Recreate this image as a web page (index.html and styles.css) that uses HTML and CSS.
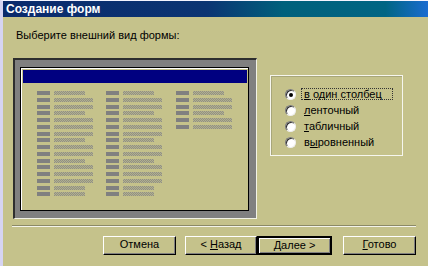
FILE: index.html
```html
<html lang="ru">
<head>
    <meta charset="UTF-8">
    <title>Создание форм</title>
    <link rel="stylesheet" href="styles.css">
</head>
<body>
    <div class="titlebar">Создание форм</div>
    <div class="prompt">Выберите внешний вид формы:</div>

    <div class="content">
        <div class="preview">
            <div class="sample">
                <div class="sample-bar"></div>
                <div class="fields">
                    <div class="col">
                        <div class="row"><span class="lbl"></span><span class="txt short"></span></div>
                        <div class="row"><span class="lbl"></span><span class="txt"></span></div>
                        <div class="row"><span class="lbl"></span><span class="txt"></span></div>
                        <div class="row"><span class="lbl"></span><span class="txt short"></span></div>
                        <div class="row"><span class="lbl"></span><span class="txt"></span></div>
                        <div class="row"><span class="lbl"></span><span class="txt"></span></div>
                        <div class="row"><span class="lbl"></span><span class="txt"></span></div>
                        <div class="row"><span class="lbl"></span><span class="txt short"></span></div>
                        <div class="row"><span class="lbl"></span><span class="txt"></span></div>
                        <div class="row"><span class="lbl"></span><span class="txt"></span></div>
                        <div class="row"><span class="lbl"></span><span class="txt short"></span></div>
                        <div class="row"><span class="lbl"></span><span class="txt"></span></div>
                        <div class="row"><span class="lbl"></span><span class="txt"></span></div>
                        <div class="row"><span class="lbl"></span><span class="txt"></span></div>
                        <div class="row"><span class="lbl"></span><span class="txt short"></span></div>
                        <div class="row"><span class="lbl"></span><span class="txt short"></span></div>
                    </div>
                    <div class="col">
                        <div class="row"><span class="lbl"></span><span class="txt short"></span></div>
                        <div class="row"><span class="lbl"></span><span class="txt"></span></div>
                        <div class="row"><span class="lbl"></span><span class="txt"></span></div>
                        <div class="row"><span class="lbl"></span><span class="txt short"></span></div>
                        <div class="row"><span class="lbl"></span><span class="txt"></span></div>
                        <div class="row"><span class="lbl"></span><span class="txt"></span></div>
                        <div class="row"><span class="lbl"></span><span class="txt"></span></div>
                        <div class="row"><span class="lbl"></span><span class="txt short"></span></div>
                        <div class="row"><span class="lbl"></span><span class="txt"></span></div>
                        <div class="row"><span class="lbl"></span><span class="txt"></span></div>
                        <div class="row"><span class="lbl"></span><span class="txt short"></span></div>
                        <div class="row"><span class="lbl"></span><span class="txt"></span></div>
                        <div class="row"><span class="lbl"></span><span class="txt"></span></div>
                        <div class="row"><span class="lbl"></span><span class="txt"></span></div>
                        <div class="row"><span class="lbl"></span><span class="txt short"></span></div>
                        <div class="row"><span class="lbl"></span><span class="txt short"></span></div>
                    </div>
                    <div class="col">
                        <div class="row"><span class="lbl"></span><span class="txt short"></span></div>
                        <div class="row"><span class="lbl"></span><span class="txt"></span></div>
                        <div class="row"><span class="lbl"></span><span class="txt"></span></div>
                        <div class="row"><span class="lbl"></span><span class="txt short"></span></div>
                        <div class="row"><span class="lbl"></span><span class="txt"></span></div>
                        <div class="row"><span class="lbl"></span><span class="txt"></span></div>
                    </div>
                </div>
            </div>
        </div>

        <div class="options">
            <div class="option"><span class="radio checked"></span><span class="focus"><u>в</u> один столбец</span></div>
            <div class="option"><span class="radio"></span><span class="caption"><u>л</u>енточный</span></div>
            <div class="option"><span class="radio"></span><span class="caption"><u>т</u>абличный</span></div>
            <div class="option"><span class="radio"></span><span class="caption">в<u>ы</u>ровненный</span></div>
        </div>
    </div>

    <div class="separator"></div>

    <div class="buttons">
        <div class="btn">Отмена</div>
        <div class="btn back">&lt; <u>Н</u>азад</div>
        <div class="btn default"><u>Д</u>алее &gt;</div>
        <div class="btn finish"><u>Г</u>отово</div>
    </div>
</body>
</html>
```

FILE: styles.css
```css
body {
    margin: 0;
    width: 428px;
    height: 266px;
    overflow: hidden;
    box-sizing: border-box;
    border-left: 3px solid #d6d4f2;
    border-top: 1px solid #f4f4ff;
    background-color: #c5c28b;
    font-family: "Liberation Sans", Arial, sans-serif;
    font-size: 11px;
    color: #000;
}

.titlebar {
    height: 16px;
    line-height: 16px;
    padding-left: 3px;
    font-size: 12px;
    font-weight: bold;
    color: #fff;
    background: linear-gradient(to right, #0a2a6c 0%, #0b3473 48%, #00607c 66%, #006584 90%, #1a6cd0 100%);
}

.prompt {
    margin: 12px 0 0 13px;
    line-height: 13px;
}

.content {
    display: flex;
    align-items: flex-start;
    margin-top: 16px;
    padding-left: 10px;
}

.preview {
    border-top: 2px solid #2e2e2e;
    border-left: 2px solid #2e2e2e;
    border-right: 1px solid #f2f2e6;
    border-bottom: 1px solid #f2f2e6;
    background-color: #808080;
    padding: 7px 7px 7px 5px;
}

.sample {
    box-sizing: border-box;
    width: 229px;
    height: 144px;
    border: 1px solid #000;
    background-color: #c5c28b;
    box-shadow: inset 1px 1px #fff;
    padding: 2px 1px 0 2px;
}

.sample-bar {
    height: 13px;
    background-color: #000080;
}

.fields {
    display: grid;
    grid-template-columns: 69px 70px 60px;
    margin: 8px 0 0 14px;
}

.col {
    display: flex;
    flex-direction: column;
    gap: 2.78px;
}

.row {
    display: flex;
    gap: 4px;
    height: 4px;
}

.lbl {
    width: 13px;
    background-color: #808080;
}

.txt {
    width: 39px;
    background: repeating-conic-gradient(#8f8f88 0 25%, #b4b28a 0 50%) 0 0 / 2px 2px;
}

.txt.short {
    width: 31px;
}

.options {
    box-sizing: border-box;
    width: 133px;
    height: 81px;
    margin: 17px 0 0 13px;
    border: 1px solid #f6f6ee;
    box-shadow: inset 1px 1px #a8a67a;
    padding: 10px 0 0 14px;
}

.option {
    display: flex;
    align-items: center;
    height: 16px;
}

.radio {
    box-sizing: border-box;
    width: 11px;
    height: 11px;
    border-radius: 50%;
    background-color: #fff;
    border: 1px solid;
    border-color: #7a7a7a #eeeeee #eeeeee #7a7a7a;
    box-shadow: inset 1px 1px #303030;
    margin-right: 5px;
    position: relative;
}

.radio.checked::after {
    content: "";
    position: absolute;
    left: 3px;
    top: 3px;
    width: 4px;
    height: 4px;
    border-radius: 50%;
    background-color: #000;
}

.caption {
    padding-left: 3px;
}

.focus {
    box-sizing: border-box;
    width: 92px;
    height: 12px;
    line-height: 10px;
    border: 1px dotted #333;
    padding-left: 2px;
}

.separator {
    width: 404px;
    margin: 6px 0 0 9px;
    border-top: 1px solid #8c8a66;
    border-bottom: 1px solid #f4f4ea;
}

.buttons {
    display: flex;
    margin-top: 9px;
    padding-left: 100px;
}

.btn {
    box-sizing: border-box;
    width: 73px;
    height: 19px;
    line-height: 15px;
    text-align: center;
    border: 1px solid;
    border-color: #fff #000 #000 #fff;
    box-shadow: inset -1px -1px #808080;
}

.btn.back {
    margin-left: 9px;
    width: 72px;
}

.btn.default {
    width: 75px;
    border: 2px solid #000;
    box-shadow: inset 1px 1px #fff, inset -1px -1px #808080;
    line-height: 15px;
}

.btn.finish {
    margin-left: 11px;
}
```
